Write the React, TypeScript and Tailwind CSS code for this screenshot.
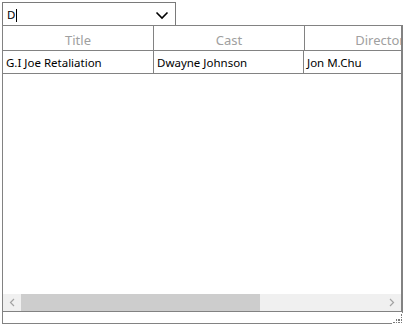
import React from "react";

const columns = ["Title", "Cast", "Director"];
const rows = [["G.I Joe Retaliation", "Dwayne Johnson", "Jon M.Chu"]];

export default function App() {
  return (
    <div className="relative h-[329px] w-[405px] bg-white pt-[2px] text-[11.5px] text-black [font-family:'Noto_Sans',sans-serif]">
      {/* Combo box */}
      <div className="ml-[2px] flex h-[24px] w-[174px] items-center border border-[#7a7a7a] pt-[2px] pl-[4px] pr-[6px]">
        <span className="leading-none">D</span>
        <span className="ml-px h-[13px] w-px bg-black" />
        <svg className="ml-auto" width="14" height="9" viewBox="0 0 14 9">
          <path d="M1.5 1.5 L7 7 L12.5 1.5" fill="none" stroke="#000" strokeWidth="1.6" />
        </svg>
      </div>

      {/* Data grid */}
      <div className="relative -mt-px ml-[2px] flex h-[299px] w-[401px] flex-col border border-[#828282]">
        <div className="flex flex-1 flex-col overflow-hidden border-r border-b border-[#828282]">
          <div className="flex h-[25px] shrink-0 border-b border-[#828282]">
            {columns.map((c) => (
              <div
                key={c}
                className="flex w-[151px] shrink-0 items-center justify-center border-r border-[#828282] pt-[5px] text-[13px] text-[#a0a0a0]"
              >
                {c}
              </div>
            ))}
          </div>
          {rows.map((r, i) => (
            <div key={i} className="flex h-[23px] shrink-0 border-b border-[#828282]">
              {r.map((cell, j) => (
                <div
                  key={j}
                  className={`flex shrink-0 items-center border-r border-[#828282] pt-[2px] pl-[3px] ${j === 0 ? "w-[151px]" : "w-[150px]"}`}
                >
                  {cell}
                </div>
              ))}
            </div>
          ))}
          <div className="flex-1" />
          {/* Horizontal scrollbar */}
          <div className="flex h-[17px] shrink-0 bg-[#f0f0f0]">
            <div className="flex w-[18px] items-center justify-center">
              <svg width="6" height="9" viewBox="0 0 6 9">
                <path d="M5 1 L1.5 4.5 L5 8" fill="none" stroke="#a3a3a3" strokeWidth="1.2" />
              </svg>
            </div>
            <div className="w-[239px] bg-[#cdcdcd]" />
            <div className="flex-1" />
            <div className="flex w-[18px] items-center justify-center">
              <svg width="6" height="9" viewBox="0 0 6 9">
                <path d="M1 1 L4.5 4.5 L1 8" fill="none" stroke="#a3a3a3" strokeWidth="1.2" />
              </svg>
            </div>
          </div>
        </div>
        <div className="h-[11px] shrink-0" />
        {/* Resize grip */}
        <div className="absolute -right-px -bottom-px grid h-[11px] w-[11px] grid-cols-4 gap-px bg-white p-px">
          {[0, 0, 0, 1, 0, 0, 0, 1, 0, 1, 1, 1, 1, 1, 1, 1].map((v, k) => (
            <span key={k} className={v ? "bg-[#7a7a7a]" : ""} />
          ))}
        </div>
      </div>
    </div>
  );
}
